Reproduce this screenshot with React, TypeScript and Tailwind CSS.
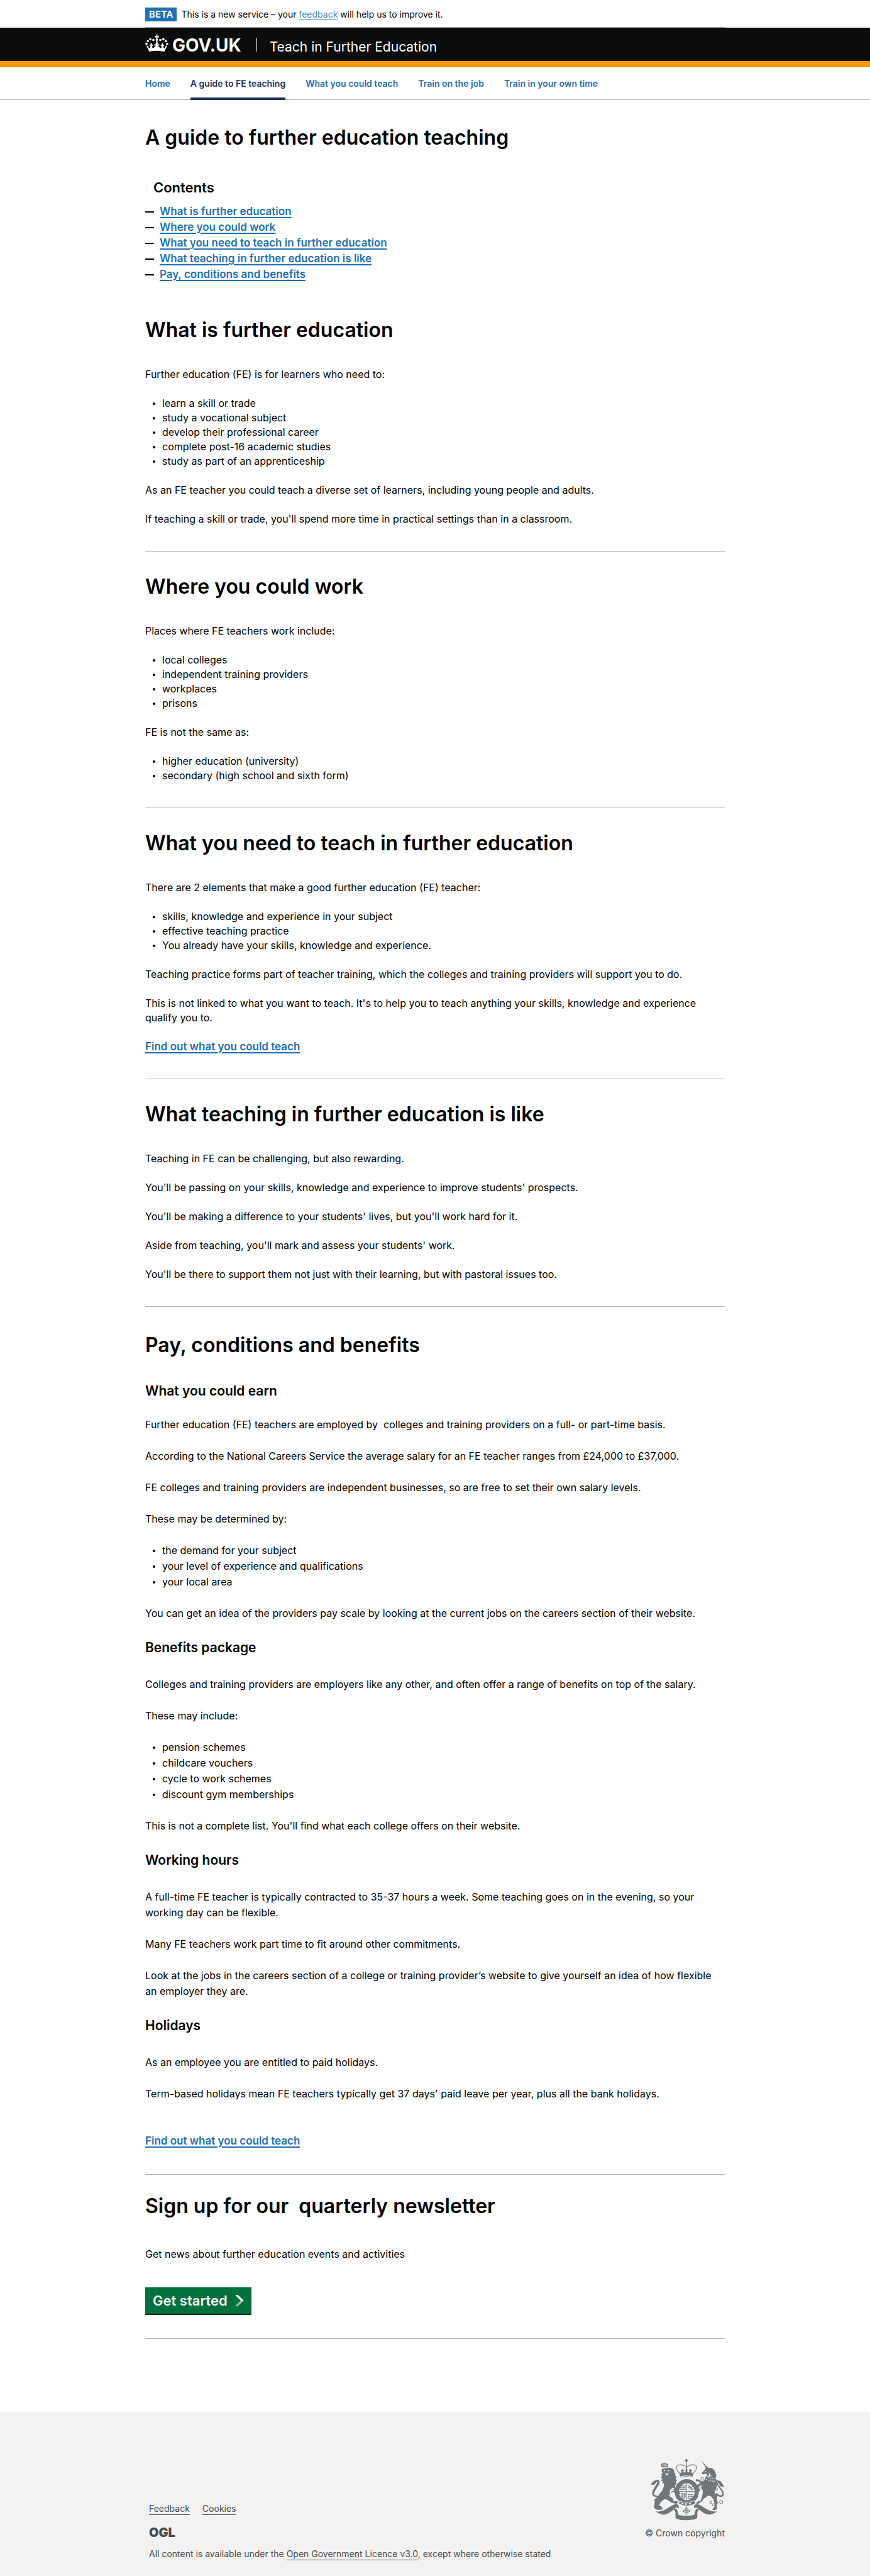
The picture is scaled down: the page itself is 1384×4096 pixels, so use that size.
import React from "react";
import type { ReactNode } from "react";

function Crown() {
  return (
    <svg viewBox="0 0 38 28" className="h-[27px] w-[37px] shrink-0 fill-white" aria-hidden="true">
      <g>
        <circle cx="1.9" cy="15.2" r="1.9" />
        <circle cx="4.1" cy="10.6" r="1.9" />
        <circle cx="8.3" cy="7.6" r="1.9" />
        <circle cx="13.3" cy="9" r="1.9" />
        <circle cx="36.1" cy="15.2" r="1.9" />
        <circle cx="33.9" cy="10.6" r="1.9" />
        <circle cx="29.7" cy="7.6" r="1.9" />
        <circle cx="24.7" cy="9" r="1.9" />
      </g>
      <path d="M17.7 0h2.6l-.6 2.7 2.6-.7v3.1l-2.6-.7.5 2.3c.8.6 1 1.7.4 2.6l-.7.7.5 3.2h-2.8l.5-3.2-.7-.7c-.6-.9-.4-2 .4-2.6l.5-2.3-2.6.7V2l2.6.7z" />
      <path d="M1.7 18c2 .1 3.300 1.400 3.900 3.600.5 1.400 1.700 1.300 2.300.1l1-3-2 .5v-2.500l2 .5-.6-2.700h2.800l-.6 2.700 2-.5v2.500l-2-.5 1.200 3c1.300.900 2.600.200 3.100-1l2.500-2.900-2.200.6v-2.800l2.400.6-.700-2.400h4.400l-.700 2.400 2.400-.6v2.800l-2.200-.6 2.500 2.900c.5 1.200 1.800 1.900 3.100 1l1.200-3-2 .5v-2.500l2 .5-.6-2.700h2.800l-.6 2.700 2-.5v2.500l-2-.5 1 3c.6 1.200 1.800 1.300 2.300-.1.600-2.200 1.900-3.500 3.900-3.600L31.500 28q-12.500-2.600-25 0z" />
    </svg>
  );
}

function RibbonWing() {
  return (
    <path d="M43 284C84 290 108 262 138 249Q152 244 158 252Q163 259 160 268Q150 260 140 270C118 288 100 302 80 300Q66 298 43 284ZM132 272Q146 282 145 300L160 306Q158 288 150 270Z" />
  );
}

function RoyalArms() {
  return (
    <svg viewBox="16 18 376 312" className="h-[99px] w-[119px] fill-[#6f777b]" role="img" aria-label="Royal coat of arms">
      <RibbonWing />
      <g transform="translate(398 0) scale(-1 1)">
        <RibbonWing />
      </g>
      <path d="M144 294Q160 306 199 306T254 294V314Q250 327 199 328T144 314Z" />

      <g>
        <path d="M195 20h8l-2 7 7-2v8l-7-2 2 8h-8l2-8-7 2v-8l7 2z" />
        <path
          d="M168 94C136 66 148 48 172 50Q194 52 199 66Q204 52 226 50C252 48 262 66 230 94"
          fill="none"
          stroke="#6f777b"
          strokeWidth="5"
          strokeDasharray="5 2"
        />
        <path d="M197 42h4v34h-4zM190 72l7 3-1-6h6l-1 6 7-3v8l-6-2 4 14h-14l4-14-6 2zM171 76l6 2-2-6h7l-2 6 6-2v7l-5-1 4 10h-13l4-10-5 1zM212 76l6 2-2-6h7l-2 6 6-2v7l-5-1 4 10h-13l4-10-5 1z" />
        <path d="M164 91Q199 84 234 91L231 108Q199 100 167 108Z" />
        <path d="M168 112Q199 104 230 112" fill="none" stroke="#6f777b" strokeWidth="3" />
      </g>

      <ellipse cx="201" cy="185" rx="50" ry="53" fill="none" stroke="#6f777b" strokeWidth="21" />
      <g stroke="#6f777b" fill="none">
        <path d="M201 141v90M160 184h82" strokeWidth="3" />
        <path d="M170 156h26M166 165h30M165 174h31M206 200h28M206 209h27M206 218h22" strokeWidth="5" strokeDasharray="7 2 4 1" />
        <path d="M208 152l24 25M232 154l-18 24M208 166l12-10M224 176l12-8" strokeWidth="3.500" />
        <path d="M172 194q-2 22 14 28 10-10 8-28zM178 196v18M183 196v22M188 196v20" strokeWidth="3" />
      </g>

      <path d="M164 232Q200 246 238 230L246 244Q204 268 160 246Z" stroke="#f3f2f1" strokeWidth="3" />
      <g fill="#f3f2f1">
        <path d="M176 240l8 3-2 7-8-3zM192 243h9v8h-9zM212 242l8-2 2 8-8 2z" />
      </g>

      <g fill="none" stroke="#6f777b" strokeWidth="3.500">
        <path d="M199 262q-8 10 0 20q8-10 0-20zM199 282v16M195 284q-4-12-12-6-2 8 9 9M203 284q4-12 12-6 2 8-9 9M190 290h18M194 298h10" />
      </g>

      <g>
        <path d="M75 63l-5-14q2-8 12-5l5-7 4 7q12-4 16 4l-3 15q-14-4-29 0zM77 54l4 4 3-8 4 7 4-7 3 7 6-4-5-6-6 3-3-5-4 5-5-2z" fillRule="evenodd" />
        <path d="M76 70L106 64L124 66L138 76L137 86L144 94L142 102L150 112L145 118L152 130L145 133L150 146L143 150L142 162L152 172L160 186L168 190L166 198L158 196L160 204L148 202L140 190L128 186L118 192L112 206L122 212L132 222L136 234L152 232L158 240L148 246L130 242L118 236L104 226L90 222L80 228L68 240L62 252L74 260L80 272L70 276L52 276L40 270L36 258L40 240L38 224L50 214L58 206L66 192L76 182L82 168L88 152L84 140L78 146L80 130L72 132L78 116L70 118L76 104L72 96L80 92L74 82Z" />
        <path d="M86 192Q54 212 40 202C28 190 62 156 64 140Q66 122 50 126Q30 130 20 150Q28 148 36 152Q42 142 50 136Q56 138 46 152C30 176 20 196 34 208Q52 218 84 200Z" />
        <path d="M84 78l10-2-3 7zM104 76l11 1-8 7zM92 90l9 5 9-6-6 14h-6z" fill="#f3f2f1" />
        <path d="M116 178l14-14 12 8-10 2 8 8-14-2-10 16z" fill="#f3f2f1" />
      </g>

      <g>
        <path d="M274 28L306 64L299 69Z" />
        <path d="M296 66L306 62L312 66L328 66L340 78L345 92L350 104L345 118L352 128L346 132L352 148L350 166L340 184L344 196L354 206L352 222L356 238L350 254L354 270L342 278L328 274L340 262L340 240L334 222L322 208L308 204L300 212L288 218L278 232L266 240L258 246L246 244L256 234L270 230L276 214L280 198L282 182L274 166L278 150L264 154L260 166L270 180L262 184L250 166L254 150L268 142L262 134L246 132L248 122L262 124L276 134L288 128L296 112L304 98L294 94L282 98L274 92L280 86L290 76Z" />
        <path d="M350 190Q372 212 380 198C384 184 354 160 348 142Q344 126 360 128Q378 130 388 164Q376 156 368 158Q364 144 356 136Q354 144 364 156C380 174 394 192 384 206Q370 218 346 200Z" />
        <path d="M290 82l8-3-2 6zM310 84l4 18 8-4 2 14M304 104l10 6 14-8" fill="#f3f2f1" />
      </g>
      <g fill="none" stroke="#6f777b" strokeWidth="3">
        <circle cx="278" cy="120" r="7" />
        <circle cx="272" cy="160" r="7" />
        <circle cx="322" cy="238" r="6" />
        <circle cx="336" cy="250" r="6" />
        <circle cx="352" cy="242" r="6" />
        <circle cx="374" cy="237" r="8" />
        <circle cx="350" cy="173" r="6" />
      </g>
      <path d="M290 116q22 18 52 16M300 106q18 14 40 14" fill="none" stroke="#f3f2f1" strokeWidth="4" strokeDasharray="6 4" />
    </svg>
  );
}

const H2 = ({ id, className = "mt-9", children }: { id?: string; className?: string; children: ReactNode }) => (
  <h2 id={id} className={`text-[32px] leading-10 font-semibold ${className}`}>{children}</h2>
);

const H3 = ({ className = "mt-7", children }: { className?: string; children: ReactNode }) => (
  <h3 className={`text-[21px] leading-7 font-semibold ${className}`}>{children}</h3>
);

const P = ({ className = "mt-[23px]", children }: { className?: string; children: ReactNode }) => (
  <p className={`max-w-[912px] ${className}`}>{children}</p>
);

const Bullets = ({ items, className = "mt-[23px]" }: { items: string[]; className?: string }) => (
  <ul className={className}>
    {items.map((item) => (
      <li key={item} className="flex items-center gap-[11px] pl-3 before:size-1 before:rounded-full before:bg-black before:content-['']">
        {item}
      </li>
    ))}
  </ul>
);

const Rule = ({ className = "mt-[39px]" }: { className?: string }) => (
  <hr className={`border-t border-[#b1b4b6] ${className}`} />
);

const FindOut = () => (
  <a href="#teach" className="text-[17px] font-semibold text-[#1d70b8] underline decoration-2 underline-offset-3">
    Find out what you could teach
  </a>
);

const navItems = ["Home", "A guide to FE teaching", "What you could teach", "Train on the job", "Train in your own time"];

const contents = [
  ["what-is", "What is further education"],
  ["where", "Where you could work"],
  ["need", "What you need to teach in further education"],
  ["like", "What teaching in further education is like"],
  ["pay", "Pay, conditions and benefits"],
];

export default function App() {
  return (
    <div className="bg-white font-['Inter',sans-serif] text-base text-black">
      <div className="mx-auto max-w-[922px]">
        <div className="flex items-center gap-[7px] border-b border-[#b1b4b6] pt-3 pb-[9px] text-sm leading-[22px]">
          <strong className="bg-[#1d70b8] px-1.5 text-[15px] leading-[22px] font-semibold text-white">BETA</strong>
          <p>
            This is a new service – your{" "}
            <a href="#feedback" className="text-[#3f88c5] underline underline-offset-3">feedback</a> will help us to improve it.
          </p>
        </div>
      </div>

      <header className="border-b-10 border-[#ff9900] bg-[#0b0c0c] text-white">
        <div className="mx-auto flex h-[53px] max-w-[922px] items-baseline pt-[11px]">
          <a href="#home" className="flex items-baseline gap-1.5 text-[28px] leading-7 font-bold">
            <Crown />
            GOV.UK
          </a>
          <span className="ml-6 inline-block h-[22px] w-px bg-white" />
          <span className="ml-5 text-[21px] leading-7">Teach in Further Education</span>
        </div>
      </header>

      <nav className="border-b border-[#b1b4b6]" aria-label="Main">
        <ul className="mx-auto -mb-px flex h-[52px] max-w-[922px] gap-8 text-sm font-semibold text-[#1d70b8]">
          {navItems.map((item) => (
            <li key={item} className="flex">
              <a
                href="#nav"
                className={
                  item === "A guide to FE teaching"
                    ? "flex items-center border-b-4 border-[#1d3461] pt-1 text-[#1d3461]"
                    : "flex items-center"
                }
              >
                {item}
              </a>
            </li>
          ))}
        </ul>
      </nav>

      <main className="mx-auto max-w-[922px] leading-[23px]">
        <h1 className="mt-10 text-[32px] leading-10 font-semibold">A guide to further education teaching</h1>

        <h2 className="mt-[45px] pl-[13px] text-[22px] leading-7 font-semibold">Contents</h2>
        <ul className="mt-3 text-[17px] leading-[25px] font-semibold">
          {contents.map(([id, label]) => (
            <li key={id} className="flex items-center gap-[9px] before:h-0.5 before:w-3.5 before:bg-black before:content-['']">
              <a href={`#${id}`} className="text-[#1d70b8] underline decoration-2 underline-offset-3">{label}</a>
            </li>
          ))}
        </ul>

        <H2 id="what-is" className="mt-14">What is further education</H2>
        <P className="mt-[39px]">Further education (FE) is for learners who need to:</P>
        <Bullets
          items={[
            "learn a skill or trade",
            "study a vocational subject",
            "develop their professional career",
            "complete post-16 academic studies",
            "study as part of an apprenticeship",
          ]}
        />
        <P>As an FE teacher you could teach a diverse set of learners, including young people and adults.</P>
        <P>If teaching a skill or trade, you'll spend more time in practical settings than in a classroom.</P>
        <Rule />

        <H2 id="where">Where you could work</H2>
        <P className="mt-[39px]">Places where FE teachers work include:</P>
        <Bullets items={["local colleges", "independent training providers", "workplaces", "prisons"]} />
        <P>FE is not the same as:</P>
        <Bullets items={["higher education (university)", "secondary (high school and sixth form)"]} />
        <Rule />

        <H2 id="need">What you need to teach in further education</H2>
        <P className="mt-[39px]">There are 2 elements that make a good further education (FE) teacher:</P>
        <Bullets
          items={[
            "skills, knowledge and experience in your subject",
            "effective teaching practice",
            "You already have your skills, knowledge and experience.",
          ]}
        />
        <P>Teaching practice forms part of teacher training, which the colleges and training providers will support you to do.</P>
        <P>
          This is not linked to what you want to teach. It's to help you to teach anything your skills, knowledge and
          experience qualify you to.
        </P>
        <P>
          <FindOut />
        </P>
        <Rule />

        <H2 id="like">What teaching in further education is like</H2>
        <P className="mt-[39px]">Teaching in FE can be challenging, but also rewarding.</P>
        <P>You'll be passing on your skills, knowledge and experience to improve students' prospects.</P>
        <P>You'll be making a difference to your students' lives, but you'll work hard for it.</P>
        <P>Aside from teaching, you'll mark and assess your students' work.</P>
        <P>You'll be there to support them not just with their learning, but with pastoral issues too.</P>
        <Rule />

        <H2 id="pay" className="mt-[41px]">Pay, conditions and benefits</H2>
        <div className="leading-[25px]">
          <H3 className="mt-[39px]">What you could earn</H3>
          <P className="mt-[27px]">
            Further education (FE) teachers are employed by {"\u00a0"}colleges and training providers on a full- or
            part-time basis.
          </P>
          <P className="mt-[25px]">
            According to the National Careers Service the average salary for an FE teacher ranges from £24,000 to £37,000.
          </P>
          <P className="mt-[25px]">
            FE colleges and training providers are independent businesses, so are free to set their own salary levels.
          </P>
          <P className="mt-[25px]">These may be determined by:</P>
          <Bullets
            className="mt-[25px]"
            items={["the demand for your subject", "your level of experience and qualifications", "your local area"]}
          />
          <P className="mt-[25px]">
            You can get an idea of the providers pay scale by looking at the current jobs on the careers section of their
            website.
          </P>

          <H3>Benefits package</H3>
          <P className="mt-8">
            Colleges and training providers are employers like any other, and often offer a range of benefits on top of the
            salary.
          </P>
          <P className="mt-[25px]">These may include:</P>
          <Bullets
            className="mt-[25px]"
            items={["pension schemes", "childcare vouchers", "cycle to work schemes", "discount gym memberships"]}
          />
          <P className="mt-[25px]">This is not a complete list. You'll find what each college offers on their website.</P>

          <H3>Working hours</H3>
          <P className="mt-8">
            A full-time FE teacher is typically contracted to 35-37 hours a week. Some teaching goes on in the evening, so
            your working day can be flexible.
          </P>
          <P className="mt-[25px]">Many FE teachers work part time to fit around other commitments.</P>
          <P className="mt-[25px]">
            Look at the jobs in the careers section of a college or training provider’s website to give yourself an idea of
            how flexible an employer they are.
          </P>

          <H3>Holidays</H3>
          <P className="mt-8">As an employee you are entitled to paid holidays.</P>
          <P className="mt-[25px]">
            Term-based holidays mean FE teachers typically get 37 days' paid leave per year, plus all the bank holidays.
          </P>
          <P className="mt-[50px]">
            <FindOut />
          </P>
        </div>
        <Rule className="mt-10" />

        <H2 className="mt-[30px]">Sign up for our {"\u00a0"}quarterly newsletter</H2>
        <P className="mt-[45px]">Get news about further education events and activities</P>
        <button
          type="button"
          className="mt-[41px] flex h-11 items-center gap-3 border-b-2 border-[#002d18] bg-[#00703c] px-3 text-[22px] font-semibold text-white"
        >
          Get started
          <svg viewBox="0 0 15 19" className="h-[18px] w-3.5" aria-hidden="true">
            <path d="M0 0h5l10 9.500H9.500z" fill="#fff" />
            <path d="M9.500 9.500H15L5 19H0z" fill="#8fc3a7" />
          </svg>
        </button>
        <Rule className="mt-[37px]" />
      </main>

      <footer className="mt-[116px] bg-[#f3f2f1] text-sm leading-5 text-[#484c4f]">
        <div className="mx-auto flex max-w-[922px] justify-between pb-[25px] pl-1.5">
          <div className="pt-36">
            <div className="flex gap-5">
              <a href="#feedback" className="underline underline-offset-4">Feedback</a>
              <a href="#cookies" className="underline underline-offset-4">Cookies</a>
            </div>
            <p className="mt-[18px] text-xl leading-5 font-black">OGL</p>
            <p className="mt-[14px]">
              All content is available under the{" "}
              <a href="#licence" className="underline underline-offset-4">Open Government Licence v3.0</a>, except where
              otherwise stated
            </p>
          </div>
          <div className="flex flex-col items-end pt-[74px]">
            <RoyalArms />
            <p className="mt-2.5">© Crown copyright</p>
          </div>
        </div>
      </footer>
    </div>
  );
}
